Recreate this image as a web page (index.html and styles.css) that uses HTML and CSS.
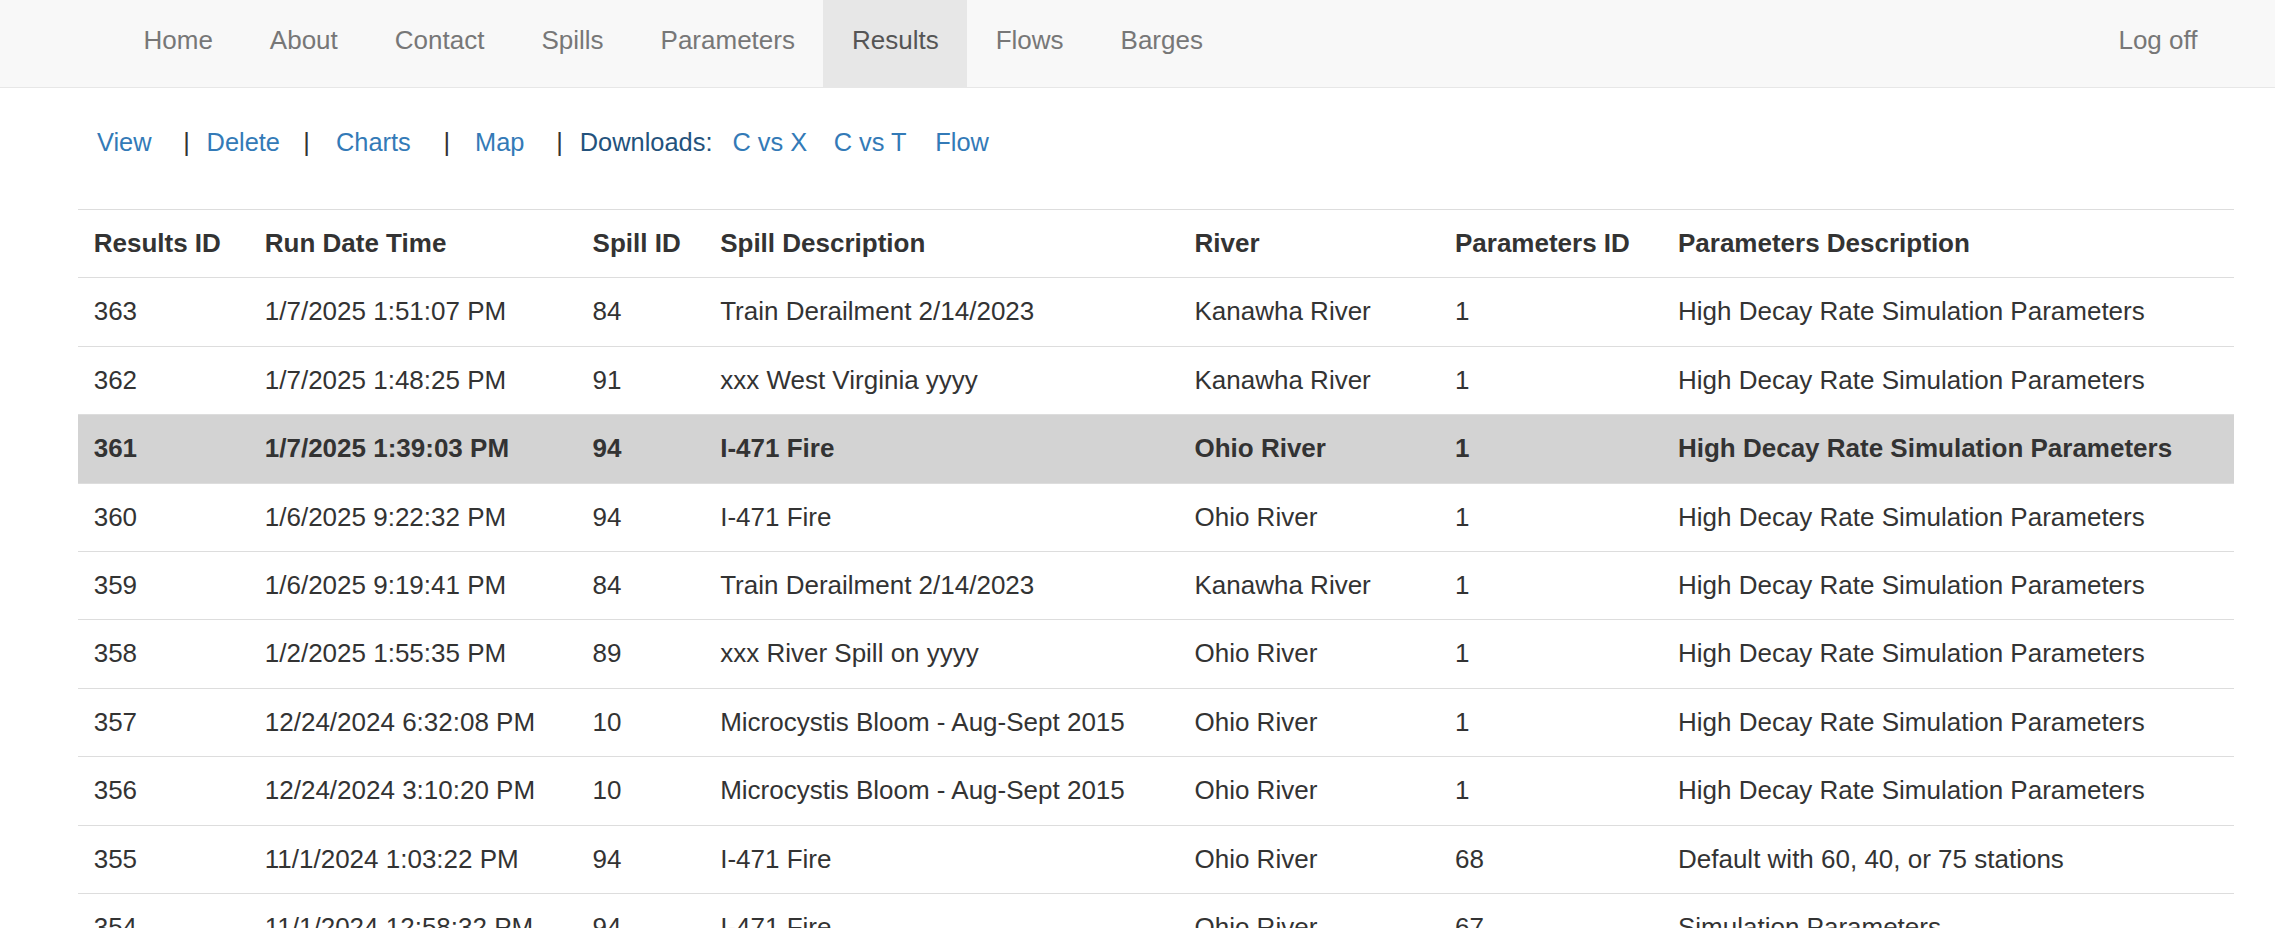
FILE: index.html
```html
<!DOCTYPE html>
<html>
<head>
<meta charset="utf-8">
<title>Results</title>
<link rel="stylesheet" href="styles.css">
</head>
<body>
<header class="navbar">
  <nav class="nav-inner">
    <ul class="nav-list">
      <li><a class="nav-link" href="#">Home</a></li>
      <li><a class="nav-link" href="#">About</a></li>
      <li><a class="nav-link" href="#">Contact</a></li>
      <li><a class="nav-link" href="#">Spills</a></li>
      <li><a class="nav-link" href="#">Parameters</a></li>
      <li><a class="nav-link active" href="#">Results</a></li>
      <li><a class="nav-link" href="#">Flows</a></li>
      <li><a class="nav-link" href="#">Barges</a></li>
    </ul>
    <ul class="nav-list">
      <li><a class="nav-link" href="#">Log off</a></li>
    </ul>
  </nav>
</header>
<main class="content">
  <div class="actions">
    <a class="act act-view" href="#">View</a>
    <span class="sep sep1">|</span>
    <a class="act act-delete" href="#">Delete</a>
    <span class="sep sep2">|</span>
    <a class="act act-charts" href="#">Charts</a>
    <span class="sep sep3">|</span>
    <a class="act act-map" href="#">Map</a>
    <span class="sep sep4">|</span>
    <span class="downloads">Downloads:</span>
    <a class="act act-cx" href="#">C vs X</a>
    <a class="act act-ct" href="#">C vs T</a>
    <a class="act act-flow" href="#">Flow</a>
  </div>
  <table class="results">
    <colgroup>
      <col class="c1"><col class="c2"><col class="c3"><col class="c4"><col class="c5"><col class="c6"><col class="c7">
    </colgroup>
    <tbody>
      <tr>
        <th>Results ID</th><th>Run Date Time</th><th>Spill ID</th><th>Spill Description</th><th>River</th><th>Parameters ID</th><th>Parameters Description</th>
      </tr>
      <tr><td>363</td><td>1/7/2025 1:51:07 PM</td><td>84</td><td>Train Derailment 2/14/2023</td><td>Kanawha River</td><td>1</td><td>High Decay Rate Simulation Parameters</td></tr>
      <tr><td>362</td><td>1/7/2025 1:48:25 PM</td><td>91</td><td>xxx West Virginia yyyy</td><td>Kanawha River</td><td>1</td><td>High Decay Rate Simulation Parameters</td></tr>
      <tr class="selected"><td>361</td><td>1/7/2025 1:39:03 PM</td><td>94</td><td>I-471 Fire</td><td>Ohio River</td><td>1</td><td>High Decay Rate Simulation Parameters</td></tr>
      <tr><td>360</td><td>1/6/2025 9:22:32 PM</td><td>94</td><td>I-471 Fire</td><td>Ohio River</td><td>1</td><td>High Decay Rate Simulation Parameters</td></tr>
      <tr><td>359</td><td>1/6/2025 9:19:41 PM</td><td>84</td><td>Train Derailment 2/14/2023</td><td>Kanawha River</td><td>1</td><td>High Decay Rate Simulation Parameters</td></tr>
      <tr><td>358</td><td>1/2/2025 1:55:35 PM</td><td>89</td><td>xxx River Spill on yyyy</td><td>Ohio River</td><td>1</td><td>High Decay Rate Simulation Parameters</td></tr>
      <tr><td>357</td><td>12/24/2024 6:32:08 PM</td><td>10</td><td>Microcystis Bloom - Aug-Sept 2015</td><td>Ohio River</td><td>1</td><td>High Decay Rate Simulation Parameters</td></tr>
      <tr><td>356</td><td>12/24/2024 3:10:20 PM</td><td>10</td><td>Microcystis Bloom - Aug-Sept 2015</td><td>Ohio River</td><td>1</td><td>High Decay Rate Simulation Parameters</td></tr>
      <tr><td>355</td><td>11/1/2024 1:03:22 PM</td><td>94</td><td>I-471 Fire</td><td>Ohio River</td><td>68</td><td>Default with 60, 40, or 75 stations</td></tr>
      <tr><td>354</td><td>11/1/2024 12:58:32 PM</td><td>94</td><td>I-471 Fire</td><td>Ohio River</td><td>67</td><td>Simulation Parameters</td></tr>
    </tbody>
  </table>
</main>
</body>
</html>
```
FILE: styles.css
```css
html, body {
  margin: 0;
  padding: 0;
}
body {
  font-family: "Liberation Sans", Arial, sans-serif;
  font-size: 26px;
  color: #333;
  background: #fff;
}
a {
  text-decoration: none;
}
.navbar {
  background: #f8f8f8;
  border-bottom: 1px solid #e7e7e7;
  height: 87px;
}
.nav-inner {
  display: flex;
  justify-content: space-between;
  padding-left: 115px;
  padding-right: 49px;
  height: 87px;
}
.nav-list {
  display: flex;
  list-style: none;
  margin: 0;
  padding: 0;
}
.nav-link {
  display: block;
  box-sizing: border-box;
  height: 87px;
  padding: 20.7px 28.5px 0;
  line-height: 38px;
  color: #777;
}
.nav-link.active {
  background: #e7e7e7;
  color: #555;
}
.content {
  padding: 0 41px 0 78px;
}
.actions {
  display: flex;
  align-items: baseline;
  font-size: 25.4px;
  line-height: 29.2px;
  margin: 39.7px 0 52.1px;
  white-space: pre;
}
.act {
  color: #337ab7;
}
.sep {
  color: #333;
}
.downloads {
  color: #23527c;
  margin-left: 17px;
}
.act-view { margin-left: 19px; }
.sep1 { margin-left: 31.7px; }
.act-delete { margin-left: 16.7px; }
.sep2 { margin-left: 23.4px; }
.act-charts { margin-left: 26px; }
.sep3 { margin-left: 32.7px; }
.act-map { margin-left: 25px; }
.sep4 { margin-left: 31.7px; }
.act-cx { margin-left: 20px; }
.act-ct { margin-left: 26.5px; }
.act-flow { margin-left: 28.7px; }

.results {
  width: 2156px;
  table-layout: fixed;
  border-collapse: collapse;
  border-spacing: 0;
}
.results .c1 { width: 171.1px; }
.results .c2 { width: 327.8px; }
.results .c3 { width: 127.6px; }
.results .c4 { width: 474.3px; }
.results .c5 { width: 260.5px; }
.results .c6 { width: 223px; }
.results .c7 { width: 571.7px; }
.results th,
.results td {
  text-align: left;
  vertical-align: top;
  padding: 15px 15.7px;
  line-height: 37.4px;
  border-top: 1px solid #ddd;
  white-space: nowrap;
}
.results th {
  font-weight: bold;
}
.results tr.selected td {
  background: #d3d3d3;
  font-weight: bold;
}
```
